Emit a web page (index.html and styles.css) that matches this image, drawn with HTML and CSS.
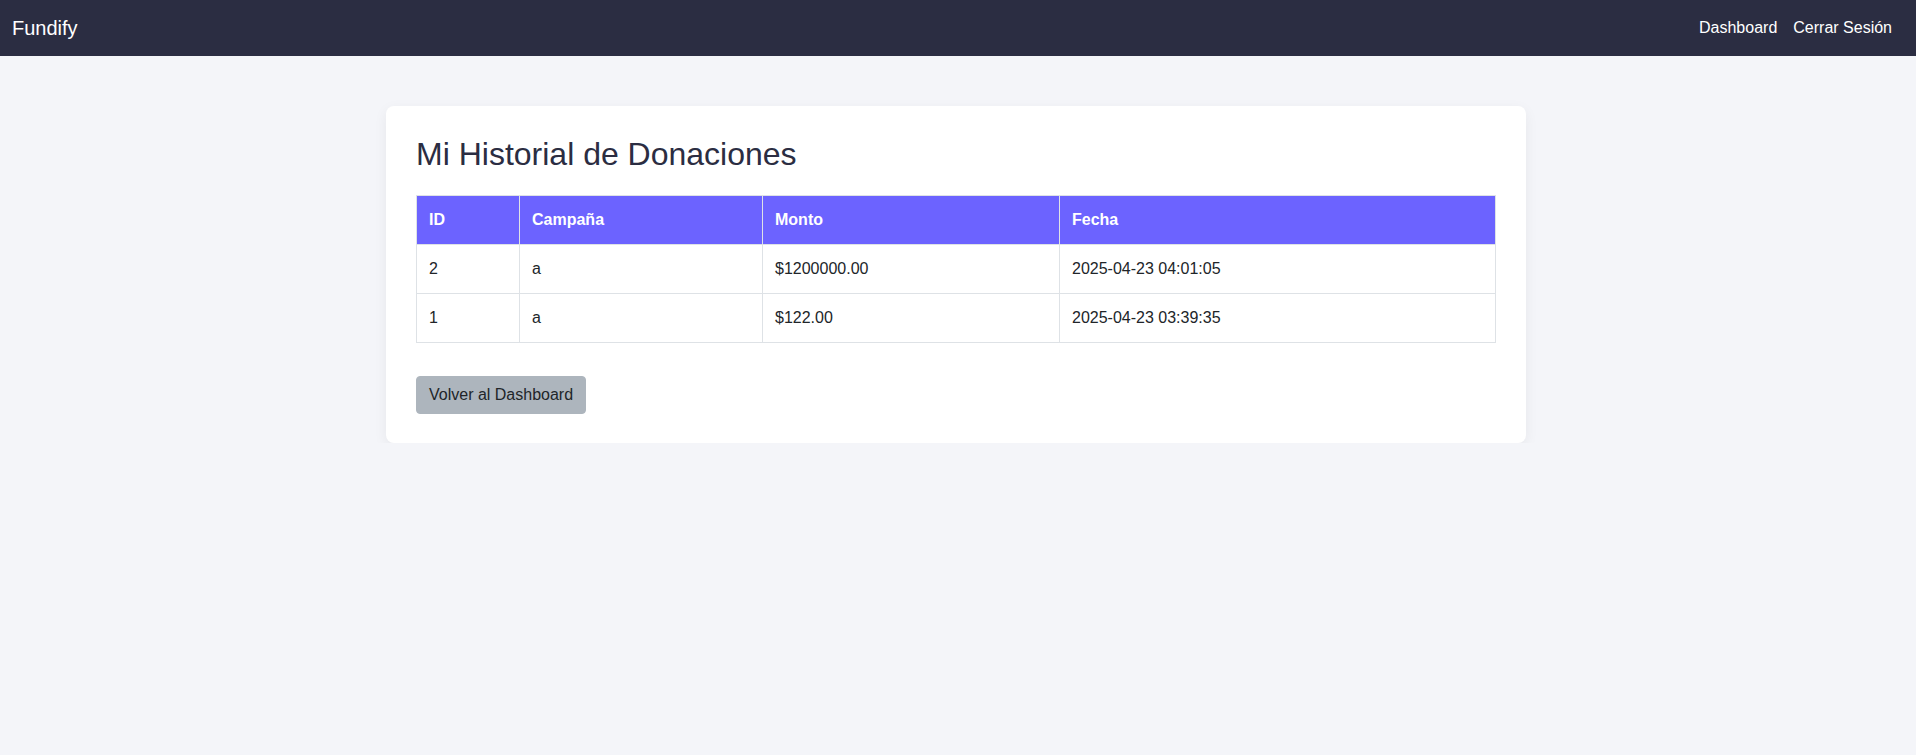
FILE: index.html
```html
<!DOCTYPE html>
<html lang="es">
<head>
<meta charset="utf-8">
<title>Mi Historial de Donaciones - Fundify</title>
<link rel="stylesheet" href="styles.css">
</head>
<body>
<nav class="navbar">
  <a class="brand" href="#">Fundify</a>
  <div class="nav-links">
    <a href="#">Dashboard</a>
    <a href="#">Cerrar Sesión</a>
  </div>
</nav>
<main class="main">
  <section class="card">
    <h2 class="title">Mi Historial de Donaciones</h2>
    <table class="table">
      <thead>
        <tr><th>ID</th><th>Campaña</th><th>Monto</th><th>Fecha</th></tr>
      </thead>
      <tbody>
        <tr><td>2</td><td>a</td><td>$1200000.00</td><td>2025-04-23 04:01:05</td></tr>
        <tr><td>1</td><td>a</td><td>$122.00</td><td>2025-04-23 03:39:35</td></tr>
      </tbody>
    </table>
    <div class="actions">
      <a class="btn" href="#">Volver al Dashboard</a>
    </div>
  </section>
</main>
</body>
</html>
```

FILE: styles.css
```css
* { box-sizing: border-box; }
html, body {
  margin: 0;
  padding: 0;
}
body {
  font-family: "Liberation Sans", Arial, Helvetica, sans-serif;
  background: #f4f5f9;
  color: #212529;
  font-size: 16px;
}
a { text-decoration: none; }

.navbar {
  height: 56px;
  background: #2b2d42;
  display: flex;
  align-items: center;
  justify-content: space-between;
  padding: 0 24px 0 12px;
}
.brand {
  color: #ffffff;
  font-size: 20px;
}
.nav-links {
  display: flex;
  gap: 16px;
}
.nav-links a {
  color: #ffffff;
  font-size: 16px;
}

.main {
  padding: 50px 4px 0 0;
}
.card {
  width: 1140px;
  margin: 0 auto;
  background: #ffffff;
  border-radius: 8px;
  padding: 30px 30px 29px;
  box-shadow: 0 4px 14px rgba(0, 0, 0, 0.06);
}
.title {
  margin: 0 0 22px;
  font-size: 32px;
  font-weight: normal;
  line-height: normal;
  color: #2b2d42;
}
.table {
  width: 100%;
  border-collapse: collapse;
  margin-bottom: 33px;
}
.table th,
.table td {
  border: 1px solid #dee2e6;
  padding: 12px;
  line-height: 24px;
  text-align: left;
}
.table th {
  background: #6c63ff;
  color: #ffffff;
  font-weight: bold;
}
.table td {
  color: #212529;
}
.table th:nth-child(1) { width: 103px; }
.table th:nth-child(2) { width: 243px; }
.table th:nth-child(3) { width: 297px; }

.actions {
  display: flex;
}
.btn {
  display: inline-block;
  background: #adb5bd;
  color: #212529;
  border: 1px solid #adb5bd;
  border-radius: 4px;
  padding: 6px 12px;
  line-height: 24px;
  font-size: 16px;
}
```
